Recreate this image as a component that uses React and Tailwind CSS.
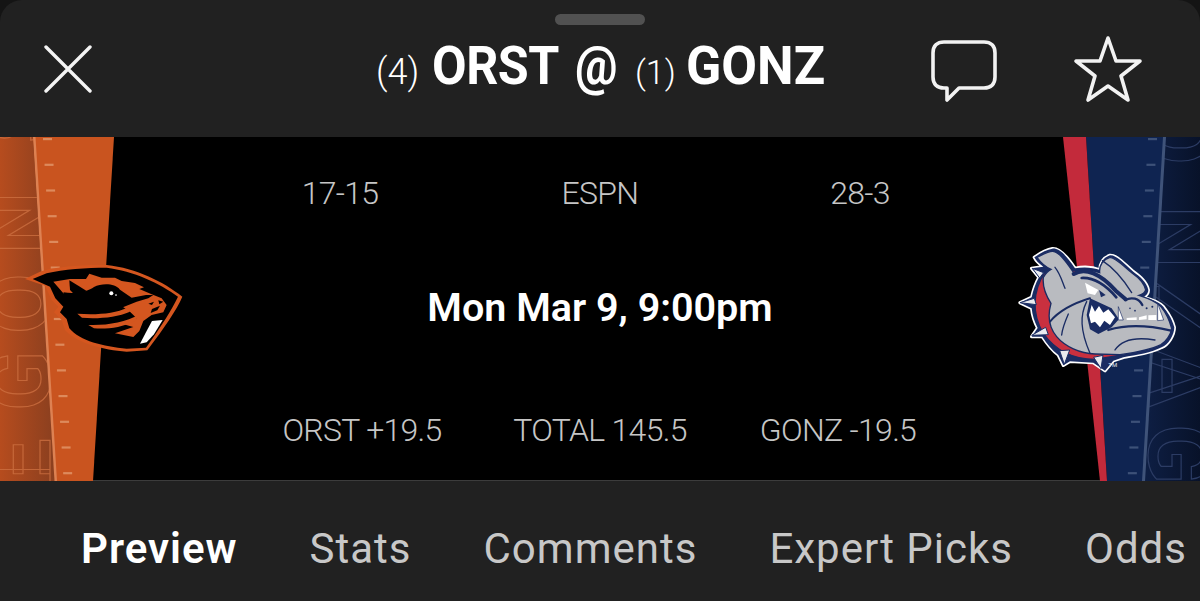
import React from "react";

const font = "font-['Roboto',sans-serif]";

function LeftArt() {
  const ticks = Array.from({ length: 14 }, (_, i) => i);
  const letters = [
    { c: "E", y: 488 },
    { c: "G", y: 411 },
    { c: "O", y: 334 },
    { c: "N", y: 254 },
    { c: "S", y: 143 },
  ];
  return (
    <g>
      <polygon points="0,137 33,137 55,481 0,481" fill="url(#orangeDark)" />
      <g clipPath="url(#leftClip)">
        {letters.map((l) => (
          <text
            key={l.c}
            transform={`translate(50 ${l.y}) rotate(-90)`}
            fontFamily="Roboto, sans-serif"
            fontWeight="700"
            fontSize="88"
            fill="none"
            stroke="#cf7243"
            strokeOpacity="0.75"
            strokeWidth="1.2"
          >
            {l.c}
          </text>
        ))}
      </g>
      <polygon points="33,137 114,137 93,481 55,481" fill="#c9541f" />
      <polygon points="33,137 35.5,137 57,481 54.5,481" fill="#dd8152" />
      {ticks.map((i) => (
        <rect key={i} x={43 + i * 1.55} y={138 + i * 25.7} width="9" height="2.2" fill="#dd8a5c" />
      ))}
    </g>
  );
}

function RightArt() {
  const ticks = Array.from({ length: 14 }, (_, i) => i);
  const letters = [
    { c: "O", y: 104 },
    { c: "N", y: 206 },
    { c: "Z", y: 280 },
    { c: "A", y: 348 },
    { c: "G", y: 424 },
  ];
  return (
    <g>
      <polygon points="1165,137 1200,137 1200,481 1143,481" fill="url(#navyDark)" />
      <g clipPath="url(#rightClip)">
        {letters.map((l) => (
          <text
            key={l.c}
            transform={`translate(1149 ${l.y}) rotate(90)`}
            fontFamily="Roboto, sans-serif"
            fontWeight="700"
            fontSize="88"
            fill="none"
            stroke="#2c3c64"
            strokeWidth="1.2"
          >
            {l.c}
          </text>
        ))}
      </g>
      <polygon points="1086,137 1165,137 1143,481 1107,481" fill="#0f2451" />
      <polygon points="1163,137 1166,137 1145,481 1142,481" fill="#3f5379" />
      <polygon points="1063,137 1086,137 1107,481 1100,481" fill="#c32a3b" />
      {ticks.map((i) => (
        <rect key={i} x={1148 - i * 1.55} y={138 + i * 25.7} width="9" height="2.2" fill="#3d5178" />
      ))}
    </g>
  );
}

function Beaver() {
  return (
    <g transform="translate(20 255) scale(0.3333)">
      <path
        d="M15,72 L60,50 C100,35 190,28 260,30 C350,40 430,80 487,125 C470,165 435,215 382,286 L320,290 C250,285 170,265 135,225 L125,195 L102,172 L115,155 L95,135 L75,92 Z"
        fill="#d4561f"
      />
      <path
        d="M38,72 L80,55 C130,42 200,38 260,38 C340,48 420,85 474,125 C455,165 428,208 378,278 L320,281 C250,275 180,258 148,220 L140,192 L120,172 L130,155 L106,130 L90,95 Z"
        fill="#000"
      />
      <path
        d="M100,80 L150,72 L198,72 L208,56 L245,68 L285,68 L305,78 L345,84 L372,97 L358,102 L395,118 L425,130 L440,150 L430,172 L395,180 L370,198 L358,228 L340,246 L285,235 L340,216 L300,205 L350,190 L330,170 L300,150 L160,115 L130,115 Z"
        fill="#d4561f"
      />
      <path d="M148,76 L175,92 L200,108 L170,125 L150,105 Z" fill="#000" />
      <path
        d="M130,112 C175,118 205,108 222,96 C245,84 285,84 300,104 L335,128 L378,120 L400,120 L385,130 L350,140 L320,152 C290,165 260,170 220,172 L160,168 Z"
        fill="#000"
      />
      <path d="M172,176 C230,180 285,176 322,158 L330,170 C290,188 230,192 186,188 Z" fill="#d4561f" />
      <path d="M205,210 C260,212 315,203 358,178 L346,197 C305,218 260,223 222,220 Z" fill="#d4561f" />
      <path d="M385,146 L402,140 L396,150 Z M396,162 L420,152 L412,166 L392,174 Z M415,136 L430,140 L418,148 Z" fill="#000" />
      <ellipse cx="272" cy="111" rx="11" ry="8" fill="#000" />
      <circle cx="274" cy="115" r="6" fill="#fff" />
      <circle cx="288" cy="120" r="2.5" fill="#fff" />
      <path d="M396,198 L428,195 L402,238 L380,262 L360,266 L378,232 Z" fill="#fff" />
    </g>
  );
}

function Bulldog() {
  const navy = "#1a2c63";
  const silhouette =
    "M58,52 C75,40 95,28 112,26 C130,24 150,40 180,85 C205,80 235,82 255,90 C255,70 262,55 285,46 C305,45 325,70 355,95 C375,110 395,125 400,150 C400,160 392,168 385,172 C410,178 430,185 445,200 C455,215 470,230 478,262 C478,285 460,315 440,322 C410,338 365,345 325,352 L295,362 L270,392 L235,368 L165,364 L145,376 L130,345 C110,330 95,310 82,290 L50,290 L68,264 C58,245 52,225 50,205 L15,188 L50,172 C55,150 62,130 72,112 L50,85 L85,80 C70,70 62,60 58,52 Z";
  return (
    <g transform="translate(1015 240) scale(0.3333)">
      <path d={silhouette} fill="#fff" stroke="#fff" strokeWidth="10" strokeLinejoin="round" />
      <path d={silhouette} fill={navy} />
      <path
        d="M88,100 C55,150 48,220 85,280 C120,330 175,358 240,358 L320,345 L180,90 Z"
        fill="#c9303f"
        stroke={navy}
        strokeWidth="4"
      />
      <path
        d="M66,52 C85,42 100,34 112,34 C130,34 150,60 176,98 C205,90 235,90 254,98 C252,75 265,58 285,52 C305,55 325,78 350,98 C370,112 388,128 392,150 C390,158 380,164 372,166 C400,175 425,185 438,200 C450,215 462,235 470,265 C468,285 452,305 438,314 C405,330 360,338 315,344 L240,342 C195,340 150,320 125,290 C100,260 98,225 108,190 C95,170 82,140 85,112 C92,100 100,92 108,88 C90,80 75,65 66,52 Z"
        fill="#b9bbc0"
        stroke={navy}
        strokeWidth="4"
      />
      <g fill="none" stroke={navy} strokeLinecap="round" strokeLinejoin="round">
        <path d="M176,102 C210,80 258,102 302,152 L332,178" strokeWidth="12" />
        <path d="M200,114 C235,112 272,135 304,172" strokeWidth="8" />
        <path d="M262,62 C290,80 320,110 350,158" strokeWidth="4" />
        <path d="M120,82 C135,100 140,120 150,145" strokeWidth="4" />
        <path d="M225,175 C175,190 130,215 105,245" strokeWidth="6" />
        <path d="M215,185 C195,225 195,270 225,340" strokeWidth="4" />
        <path d="M160,222 C150,245 142,265 140,285" strokeWidth="4" />
        <path d="M280,270 C340,252 400,256 468,272" strokeWidth="7" />
        <path d="M300,330 C320,300 360,290 420,300" strokeWidth="4" />
        <path d="M330,180 C350,170 372,175 382,195" strokeWidth="7" />
      </g>
      <path d="M210,128 L250,150 L240,165 L218,160 Z" fill="#fff" />
      <path d="M252,150 L272,165 L258,172 Z" fill={navy} />
      <path d="M225,175 L290,205 L312,238 L290,262 L250,282 L225,268 L215,225 Z" fill={navy} />
      <path
        d="M230,195 L240,215 L252,198 L265,218 L280,208 L300,232 L285,255 L268,242 L255,262 L240,245 L228,250 L222,225 Z"
        fill="#fff"
      />
      <path d="M310,200 L325,240 L310,240 Z M428,190 L446,240 L428,242 Z" fill="#fff" stroke={navy} strokeWidth="2" />
      <path d="M335,234 L365,232 L365,240 L335,240 Z M372,232 L395,226 L395,238 L372,240 Z M400,226 L424,225 L424,240 L400,240 Z" fill="#fff" />
      <circle cx="345" cy="205" r="2.5" fill={navy} />
      <circle cx="360" cy="212" r="2.5" fill={navy} />
      <circle cx="395" cy="205" r="3" fill={navy} />
      <circle cx="412" cy="200" r="3" fill={navy} />
      <g fill="#e9ebef" stroke={navy} strokeWidth="3" strokeLinejoin="round">
        <path d="M15,188 L58,175 L64,194 Z" />
        <path d="M50,286 L92,262 L100,284 Z" />
        <path d="M52,85 L86,98 L74,114 Z" />
        <path d="M148,373 L134,332 L164,330 Z" />
        <path d="M258,386 L236,352 L264,346 Z" />
      </g>
      <text x="280" y="382" fontFamily="Roboto, sans-serif" fontSize="18" fontWeight="500" fill="#c8ccd6">
        TM
      </text>
    </g>
  );
}

function HeroArt() {
  return (
    <svg className="absolute inset-0" width="1200" height="344" viewBox="0 137 1200 344">
      <defs>
        <linearGradient id="orangeDark" x1="0" y1="0" x2="1" y2="0">
          <stop offset="0" stopColor="#b64c1e" />
          <stop offset="1" stopColor="#8a3f1f" />
        </linearGradient>
        <linearGradient id="navyDark" x1="0" y1="0" x2="1" y2="0">
          <stop offset="0" stopColor="#0e1f45" />
          <stop offset="1" stopColor="#081229" />
        </linearGradient>
        <clipPath id="leftClip">
          <polygon points="0,137 33,137 55,481 0,481" />
        </clipPath>
        <clipPath id="rightClip">
          <polygon points="1165,137 1200,137 1200,481 1143,481" />
        </clipPath>
      </defs>
      <LeftArt />
      <RightArt />
      <Beaver />
      <Bulldog />
    </svg>
  );
}

export default function App() {
  const tabs = ["Preview", "Stats", "Comments", "Expert Picks", "Odds"];
  return (
    <div className={`${font} w-[1200px] h-[601px] overflow-hidden bg-[#141414]`}>
      <div className="w-full h-full rounded-t-[22px] bg-[#212121] flex flex-col overflow-hidden">
        <header className="relative h-[137px] shrink-0 flex items-center pl-[44px] pr-[57px]">
          <div className="absolute left-[555px] top-[14px] w-[90px] h-[11px] rounded-full bg-[#515151]" />
          <svg width="48" height="48" viewBox="0 0 48 48" className="shrink-0">
            <path d="M2 2 L46 46 M46 2 L2 46" stroke="#f4f4f4" strokeWidth="3.4" strokeLinecap="round" />
          </svg>
          <div className="flex-1 flex items-baseline pl-[284px] text-white whitespace-nowrap">
            <span className="w-[56px] text-[36px] font-light">(4)</span>
            <span className="w-[143px] origin-left scale-x-[0.93] text-[54px] font-bold tracking-[-0.5px] leading-none">ORST</span>
            <span className="w-[60px] origin-left scale-x-[0.88] text-[54px] font-bold leading-none">@</span>
            <span className="w-[51px] text-[34px] font-light">(1)</span>
            <span className="origin-left scale-x-[0.96] text-[54px] font-bold leading-none">GONZ</span>
          </div>
          <svg width="70" height="66" viewBox="0 0 70 66" className="shrink-0 mr-[74px] mt-[6px]">
            <path
              d="M15 3 H55 C62 3 66 7 66 14 V38 C66 45 62 49 55 49 H30 L18 61 V49 H15 C8 49 4 45 4 38 V14 C4 7 8 3 15 3 Z"
              fill="none"
              stroke="#f2f2f2"
              strokeWidth="3.6"
              strokeLinejoin="round"
            />
          </svg>
          <svg width="70" height="68" viewBox="0 0 70 68" className="shrink-0">
            <path
              d="M35 3 L43 26 L67 26 L48 41 L55 65 L35 51 L15 65 L22 41 L3 26 L27 26 Z"
              fill="none"
              stroke="#f2f2f2"
              strokeWidth="3.6"
              strokeLinejoin="round"
            />
          </svg>
        </header>

        <section className="relative h-[344px] shrink-0 bg-black border-b border-[#3c3c3c]">
          <HeroArt />
          <div className="relative h-full flex flex-col items-center justify-between pt-[36px] pb-[30px] text-[#c6c6c6] text-[32px] font-light tracking-[-0.7px] leading-[40px]">
            <div className="w-[780px] grid grid-cols-3 text-center">
              <span>17-15</span>
              <span>ESPN</span>
              <span>28-3</span>
            </div>
            <div className="text-white font-semibold text-[39.5px] tracking-normal mb-[8px]">Mon Mar 9, 9:00pm</div>
            <div className="w-[714px] grid grid-cols-3 text-center whitespace-nowrap">
              <span>ORST +19.5</span>
              <span>TOTAL 145.5</span>
              <span>GONZ -19.5</span>
            </div>
          </div>
        </section>

        <nav className="flex-1 flex items-center gap-[72px] pl-[81px] pt-[14px] text-[42px] tracking-[1px] text-[#c8c8c8] whitespace-nowrap">
          {tabs.map((t, i) => (
            <span key={t} className={i === 0 ? "text-white font-semibold" : "font-normal"}>
              {t}
            </span>
          ))}
        </nav>
      </div>
    </div>
  );
}
